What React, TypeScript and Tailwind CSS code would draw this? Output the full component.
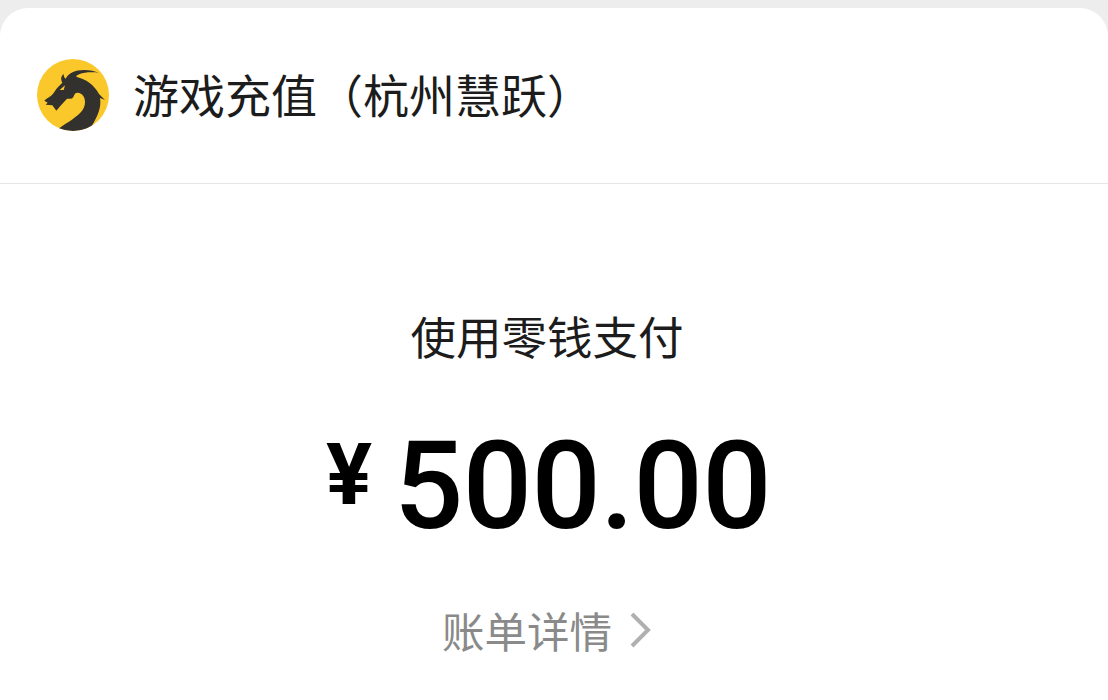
const CJK = "font-['Noto_Sans_CJK_SC','Noto_Sans',sans-serif]"

function DragonLogo() {
  return (
    <svg width="74" height="74" viewBox="15 10 222 222" className="shrink-0">
      <defs>
        <clipPath id="logo-circle">
          <circle cx="126" cy="121" r="108" />
        </clipPath>
      </defs>
      <circle cx="126" cy="121" r="108" fill="#fbc82c" />
      <g clipPath="url(#logo-circle)">
        <path
          fill="#33312e"
          d="M40 138 C50 128 62 126 70 112 C78 98 86 92 94 84 C88 74 90 64 98 58 C98 66 100 70 104 72 C112 56 132 46 160 46 C176 46 192 50 204 54 C184 52 160 52 146 58 C136 62 132 66 140 68 C165 74 190 92 204 118 L222 136 L207 130 C212 160 200 190 165 240 L62 240 C90 212 126 198 150 172 C170 150 164 116 140 114 C126 114 132 130 120 132 L108 132 L90 152 L76 168 L64 152 L44 150 L50 144 Z"
        />
        <path fill="#fbc82c" d="M86 106 L102 92 L98 106 Z" />
      </g>
    </svg>
  )
}

export default function App() {
  return (
    <div className={`h-[700px] w-[1108px] overflow-hidden bg-[#ededed] pt-2 ${CJK}`}>
      <div className="h-full rounded-t-[28px] bg-white">
        <div className="flex h-[176px] items-center gap-[23px] border-b border-[#e6e6e6] pl-9 pb-[2px]">
          <DragonLogo />
          <span className="-mt-1 text-[46px] leading-none text-[#1c1c1c]">游戏充值（杭州慧跃）</span>
        </div>

        <div className="flex flex-col items-center pr-[14px]">
          <div className="mt-[129px] text-[45.5px] leading-none text-[#1c1c1c]">使用零钱支付</div>
          <div className="ml-[3px] mt-[67px] flex items-start font-['Roboto',sans-serif] font-medium leading-none text-black">
            <span className="mr-[22px] mt-[5px] text-[86px] font-bold leading-[88px]">¥</span>
            <span className="text-[122px] leading-[122px] tracking-[-0.6px]">500.00</span>
          </div>
          <div className="mt-[61px] flex items-center gap-[16px] text-[42.5px] leading-none text-[#8a8a8a]">
            <span>账单详情</span>
            <svg width="24" height="38" viewBox="0 0 24 38" fill="none" stroke="#b0b0b0" strokeWidth="4">
              <path d="M4 3 L20 19 L4 35" />
            </svg>
          </div>
        </div>
      </div>
    </div>
  )
}
